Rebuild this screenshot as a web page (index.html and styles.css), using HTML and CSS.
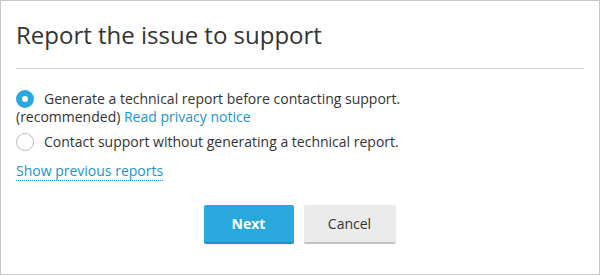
FILE: index.html
```html
<!DOCTYPE html>
<html lang="en">
<head>
<meta charset="utf-8">
<title>Report the issue to support</title>
<link rel="stylesheet" href="styles.css">
</head>
<body>
<div class="dialog">
  <h1 class="title">Report the issue to support</h1>
  <div class="divider"></div>
  <div class="options">
    <label class="option"><span class="radio radio-on"></span>Generate a technical report before contacting support.<br>(recommended) <a class="link" href="#">Read privacy notice</a></label>
    <label class="option option-2"><span class="radio"></span>Contact support without generating a technical report.</label>
    <a class="link dotted" href="#">Show previous reports</a>
  </div>
  <div class="actions">
    <button class="btn btn-primary">Next</button>
    <button class="btn btn-secondary">Cancel</button>
  </div>
</div>
</body>
</html>
```
FILE: styles.css
```css
html, body {
  margin: 0;
  padding: 0;
  background: #ffffff;
}
.dialog {
  box-sizing: border-box;
  width: 600px;
  height: 275px;
  border: 1px solid #c8c8c8;
  padding: 18px 15px 0 15px;
  font-family: "Open Sans", "Liberation Sans", sans-serif;
  color: #333333;
}
.title {
  margin: 0;
  font-size: 24px;
  font-weight: 400;
  line-height: 32px;
  color: #333333;
}
.divider {
  margin-top: 17px;
  border-top: 1px solid #d4d4de;
}
.options {
  margin-top: 21px;
  font-size: 14px;
  line-height: 18px;
}
.option {
  display: block;
}
.option-2 {
  margin-top: 7px;
}
.radio {
  display: inline-block;
  box-sizing: border-box;
  width: 18px;
  height: 18px;
  border-radius: 50%;
  border: 1px solid #bdbdbd;
  background: #ffffff;
  margin-right: 10px;
  vertical-align: -4px;
}
.radio-on {
  border: 6px solid #29a8de;
  background: #ffffff;
}
.link {
  color: #1b93cb;
  text-decoration: none;
}
.dotted {
  display: inline-block;
  margin-top: 11px;
  border-bottom: 1px dotted #1b93cb;
  line-height: 18px;
}
.actions {
  display: flex;
  justify-content: center;
  gap: 10px;
  margin-top: 24px;
  margin-left: -1px;
}
.btn {
  box-sizing: border-box;
  height: 39px;
  border: none;
  border-radius: 2px;
  font-family: "Open Sans", "Liberation Sans", sans-serif;
  font-size: 14px;
  padding: 0;
}
.btn-primary {
  width: 90px;
  background: #29a8de;
  border-bottom: 2px solid #1f8fc0;
  color: #ffffff;
  font-weight: 700;
}
.btn-secondary {
  width: 92px;
  background: #ebebeb;
  border-bottom: 2px solid #c2c2c2;
  color: #333333;
}
```
